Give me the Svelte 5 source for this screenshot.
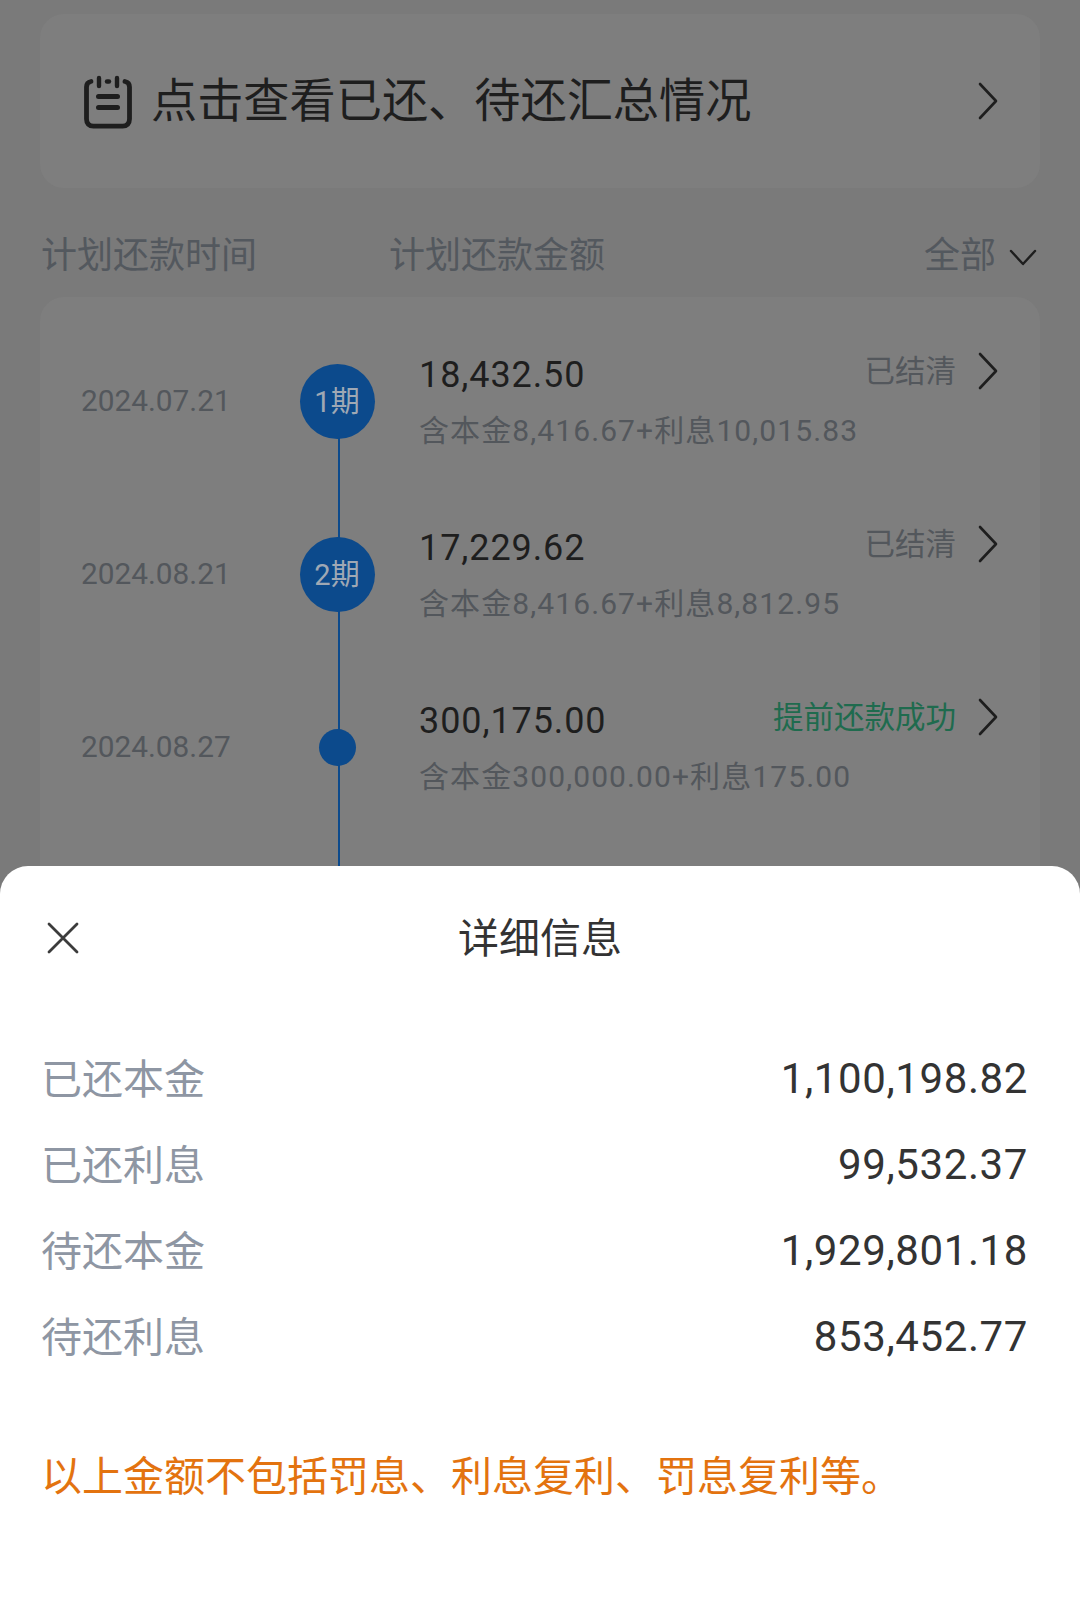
<script lang="ts">
  const plans = [
    { date: '2024.07.21', term: '1期', amount: '18,432.50', detail: '含本金8,416.67+利息10,015.83', status: '已结清', done: false },
    { date: '2024.08.21', term: '2期', amount: '17,229.62', detail: '含本金8,416.67+利息8,812.95', status: '已结清', done: false },
    { date: '2024.08.27', term: '', amount: '300,175.00', detail: '含本金300,000.00+利息175.00', status: '提前还款成功', done: true }
  ];

  const details = [
    { label: '已还本金', value: '1,100,198.82' },
    { label: '已还利息', value: '99,532.37' },
    { label: '待还本金', value: '1,929,801.18' },
    { label: '待还利息', value: '853,452.77' }
  ];
</script>

<div class="page">
  <div class="summary">
    <svg class="note-icon" viewBox="0 0 48 54" width="48" height="54" fill="none" stroke="#1e1e1e" stroke-linecap="round">
      <path d="M7 6.500C4 7 2.500 9 2.500 12v32c0 4.500 2.500 7.200 7 7.200h29c4.500 0 7-2.700 7-7.200V12c0-3-1.500-5-4.500-5.500" stroke-width="4.800" />
      <path d="M15 3v8M33 3v8" stroke-width="4.400" />
      <path d="M23 6.500h2" stroke-width="4.400" />
      <path d="M14.500 21.500h19M14.500 32.500h19" stroke-width="5" />
    </svg>
    <span class="summary-text">点击查看已还、待还汇总情况</span>
    <svg class="chevron" viewBox="0 0 20 38" width="20" height="38" fill="none" stroke="#1e1e1e" stroke-width="2.600" stroke-linecap="round" stroke-linejoin="round">
      <path d="M2 2l16 17L2 36" />
    </svg>
  </div>

  <div class="table-head">
    <span class="col-time">计划还款时间</span>
    <span class="col-amount">计划还款金额</span>
    <span class="col-filter">
      全部
      <svg viewBox="0 0 28 18" width="28" height="18" fill="none" stroke="#1e1e1e" stroke-width="2.400" stroke-linecap="round" stroke-linejoin="round">
        <path d="M2 2l12 13L26 2" />
      </svg>
    </span>
  </div>

  <div class="plans">
    {#each plans as plan}
      <div class="plan">
        <span class="date">{plan.date}</span>
        <div class="node">
          <span class="line"></span>
          {#if plan.term}
            <span class="badge">{plan.term}</span>
          {:else}
            <span class="dot"></span>
          {/if}
        </div>
        <div class="info">
          <div class="info-top">
            <span class="amount">{plan.amount}</span>
            <span class="status" class:done={plan.done}>{plan.status}</span>
            <svg class="chevron" viewBox="0 0 20 38" width="20" height="38" fill="none" stroke="#1e1e1e" stroke-width="2.600" stroke-linecap="round" stroke-linejoin="round">
              <path d="M2 2l16 17L2 36" />
            </svg>
          </div>
          <div class="detail">{plan.detail}</div>
        </div>
      </div>
    {/each}
  </div>

  <div class="sheet">
    <div class="sheet-head">
      <svg class="close" viewBox="0 0 32 32" width="32" height="32" fill="none" stroke="#3c3c3c" stroke-width="2.800" stroke-linecap="round">
        <path d="M2 2l28 28M30 2L2 30" />
      </svg>
      <span class="sheet-title">详细信息</span>
    </div>
    <div class="rows">
      {#each details as row}
        <div class="row">
          <span class="row-label">{row.label}</span>
          <span class="row-value">{row.value}</span>
        </div>
      {/each}
    </div>
    <p class="note">以上金额不包括罚息、利息复利、罚息复利等。</p>
  </div>
</div>

<style>
  :global(body) {
    margin: 0;
  }

  .page {
    position: relative;
    width: 1080px;
    height: 1599px;
    overflow: hidden;
    box-sizing: border-box;
    padding: 14px 40px 0;
    background: #7a7a7a;
    font-family: Roboto, "Noto Sans CJK SC", sans-serif;
  }

  .summary {
    height: 174px;
    box-sizing: border-box;
    padding: 0 42px 0 44px;
    display: flex;
    align-items: center;
    background: #7e7e7e;
    border-radius: 24px;
  }

  .note-icon {
    flex: none;
    margin-top: 2px;
  }

  .summary-text {
    margin-left: 19px;
    flex: 1;
    font-size: 46.200px;
    line-height: 60px;
    color: #1e1e1e;
  }

  .chevron {
    flex: none;
  }

  .table-head {
    height: 109px;
    box-sizing: border-box;
    padding-top: 27px;
    display: flex;
    align-items: center;
    font-size: 36px;
    line-height: 46px;
    color: #53585e;
  }

  .col-time {
    width: 348px;
    margin-left: 1px;
  }

  .col-filter {
    margin-left: auto;
    display: flex;
    align-items: center;
    gap: 13px;
  }

  .col-filter svg {
    margin-top: 4px;
    margin-right: 3px;
  }

  .plans {
    height: 900px;
    box-sizing: border-box;
    padding: 18px 42px 0 41px;
    background: #7e7e7e;
    border-radius: 24px;
  }

  .plan {
    height: 173px;
    display: flex;
    align-items: center;
  }

  .date {
    width: 218px;
    flex: none;
    margin-top: -2px;
    font-size: 29.800px;
    color: #53575c;
  }

  .node {
    position: relative;
    width: 76px;
    height: 100%;
    flex: none;
    display: flex;
    align-items: center;
    justify-content: center;
  }

  .line {
    position: absolute;
    left: 39px;
    top: 50%;
    width: 2px;
    height: 100%;
    background: #0c4a8c;
  }

  .badge {
    position: relative;
    width: 75px;
    height: 75px;
    box-sizing: border-box;
    padding-bottom: 6px;
    border-radius: 50%;
    display: flex;
    align-items: center;
    justify-content: center;
    background: #0c4a8c;
    color: #9fa8b4;
    font-size: 29px;
  }

  .dot {
    position: relative;
    width: 37px;
    height: 37px;
    border-radius: 50%;
    background: #0c4a8c;
  }

  .info {
    flex: 1;
    margin-left: 44px;
    padding-top: 1px;
  }

  .info-top {
    display: flex;
    align-items: center;
    height: 44px;
  }

  .amount {
    flex: 1;
    font-size: 36px;
    letter-spacing: 0.9px;
    color: #1e1e1e;
  }

  .status {
    margin: -12px 22px 0 0;
    font-size: 30.500px;
    color: #53575c;
  }

  .status.done {
    color: #1f6b4e;
  }

  .info-top .chevron {
    margin-top: -8px;
  }

  .detail {
    margin-top: 13px;
    font-size: 30px;
    letter-spacing: 1.1px;
    line-height: 42px;
    color: #53575c;
    white-space: nowrap;
  }

  .sheet {
    position: absolute;
    left: 0;
    right: 0;
    top: 866px;
    bottom: 0;
    box-sizing: border-box;
    padding: 0 52px 0 41px;
    background: #fff;
    border-radius: 28px 28px 0 0;
  }

  .sheet-head {
    position: relative;
    height: 146px;
    display: flex;
    align-items: center;
    justify-content: center;
    margin-right: -11px;
  }

  .close {
    position: absolute;
    left: 6px;
    top: 56px;
  }

  .sheet-title {
    font-size: 41px;
    line-height: 52px;
    color: #333;
  }

  .rows {
    margin-top: 23px;
  }

  .row {
    height: 86px;
    display: flex;
    align-items: center;
    justify-content: space-between;
  }

  .row-label {
    margin-top: -5px;
    font-size: 41px;
    color: #8e96a3;
  }

  .row-value {
    font-size: 42px;
    letter-spacing: 0.6px;
    color: #333;
  }

  .note {
    margin: 73px 0 0;
    font-size: 41px;
    line-height: 50px;
    color: #e3730f;
    white-space: nowrap;
  }
</style>
